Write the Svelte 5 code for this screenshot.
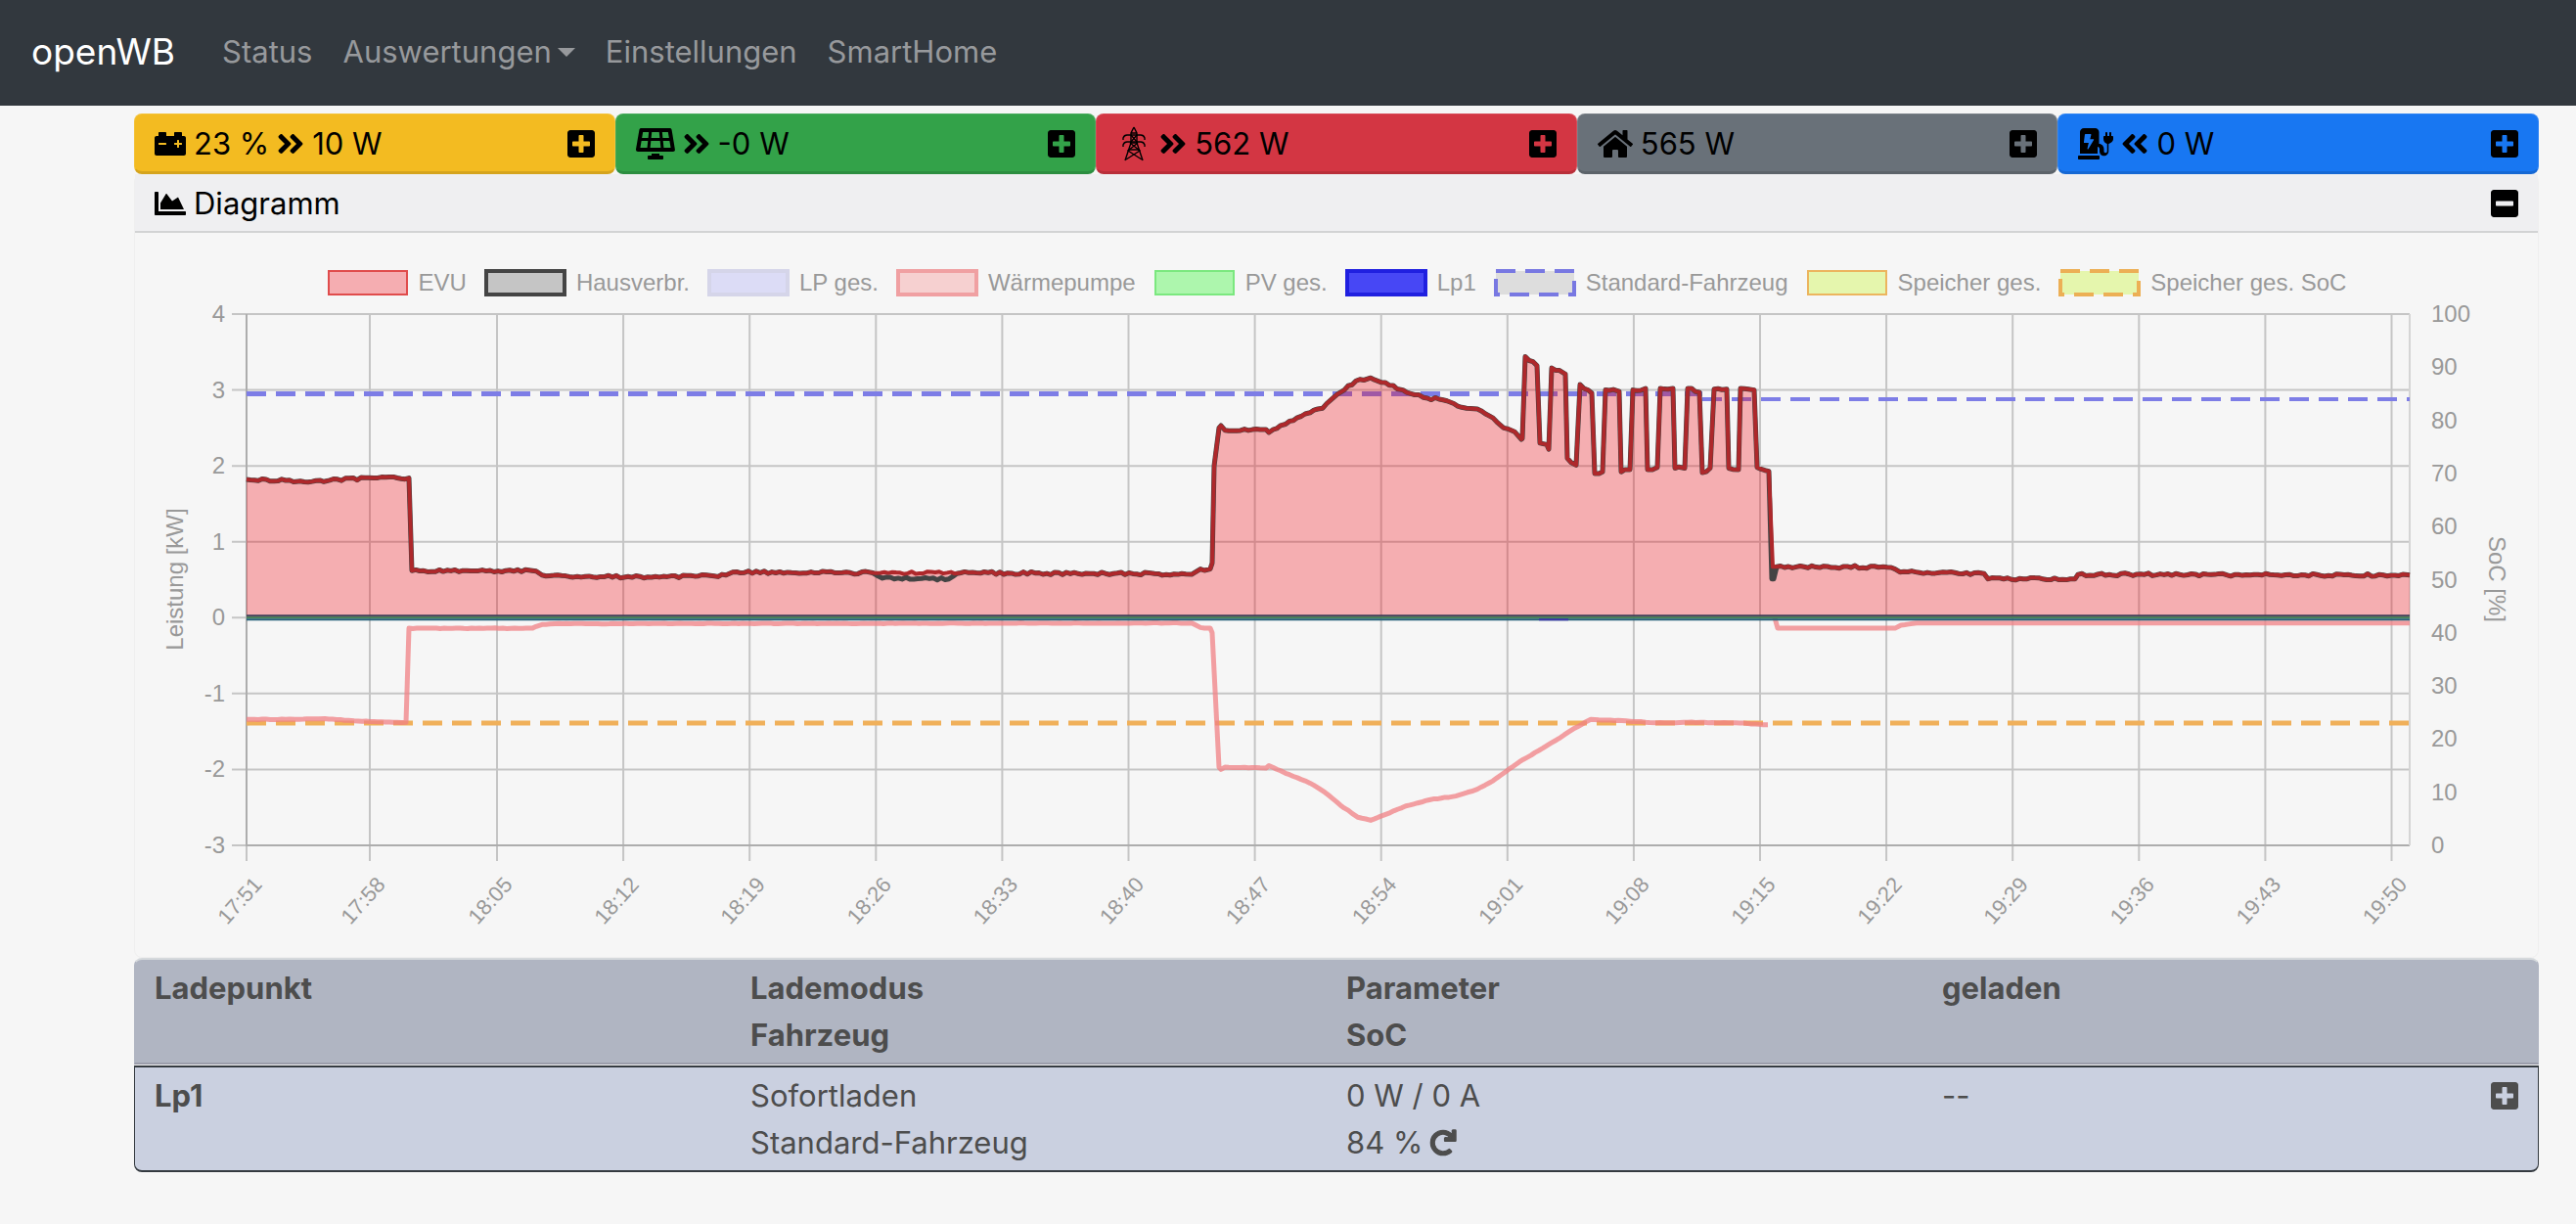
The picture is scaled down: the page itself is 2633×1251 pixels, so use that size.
<script>
  const icons = {
    battery: { w: 512, d: 'M480 128h-32V80c0-8.84-7.16-16-16-16h-96c-8.84 0-16 7.16-16 16v48H192V80c0-8.84-7.16-16-16-16H80c-8.84 0-16 7.16-16 16v48H32c-17.67 0-32 14.33-32 32v256c0 17.67 14.33 32 32 32h448c17.67 0 32-14.33 32-32V160c0-17.67-14.33-32-32-32zM192 264c0 4.42-3.58 8-8 8H72c-4.42 0-8-3.58-8-8v-16c0-4.42 3.58-8 8-8h112c4.42 0 8 3.58 8 8v16zm256 0c0 4.42-3.58 8-8 8h-40v40c0 4.42-3.58 8-8 8h-16c-4.42 0-8-3.58-8-8v-40h-40c-4.42 0-8-3.58-8-8v-16c0-4.42 3.58-8 8-8h40v-40c0-4.42 3.58-8 8-8h16c4.42 0 8 3.58 8 8v40h40c4.42 0 8 3.58 8 8v16z' },
    solar: { w: 640, d: 'M431.98 448.01l-47.97.05V416h-128v32.21l-47.98.05c-8.82.01-15.97 7.16-15.98 15.99l-.05 31.73c-.01 8.85 7.17 16.03 16.02 16.02l223.96-.26c8.82-.01 15.97-7.16 15.98-15.98l.04-31.73c.01-8.85-7.17-16.03-16.02-16.02zM585.2 26.74C582.58 11.31 568.99 0 553.06 0H86.93C71 0 57.41 11.31 54.79 26.74-3.32 369.16.04 348.08.03 352c-.03 17.32 14.29 32 32.6 32h574.74c18.23 0 32.51-14.56 32.59-31.79.02-4.08 3.35 16.95-54.76-325.47zM259.83 64h120.33l9.77 96H250.06l9.77-96zm-75.17 256H71.09L90.1 208h105.97l-11.41 112zm16.16-160H98.24l16.29-96h96.19l-9.9 96zm32.82 160l11.4-112h149.96l11.4 112H233.64zm195.5-256h96.19l16.29 96H439.04l-9.9-96zm26.1 256L443.82 208h105.97l19.01 112H455.24z' },
    home: { w: 576, d: 'M280.37 148.26L96 300.11V464a16 16 0 0 0 16 16l112.06-.29a16 16 0 0 0 15.92-16V368a16 16 0 0 1 16-16h64a16 16 0 0 1 16 16v95.64a16 16 0 0 0 16 16.05L464 480a16 16 0 0 0 16-16V300L295.67 148.26a12.19 12.19 0 0 0-15.3 0zM571.6 251.47L488 182.56V44.05a12 12 0 0 0-12-12h-56a12 12 0 0 0-12 12v72.61L318.47 43a48 48 0 0 0-61 0L4.34 251.47a12 12 0 0 0-1.6 16.9l25.5 31A12 12 0 0 0 45.15 301l235.22-193.74a12.19 12.19 0 0 1 15.3 0L530.9 301a12 12 0 0 0 16.9-1.6l25.5-31a12 12 0 0 0-1.7-16.93z' },
    charger: { w: 576, d: 'M336 448H16c-8.84 0-16 7.16-16 16v32c0 8.84 7.16 16 16 16h320c8.84 0 16-7.16 16-16v-32c0-8.84-7.16-16-16-16zM544 128V80c0-8.84-7.16-16-16-16s-16 7.16-16 16v48h-32V80c0-8.84-7.16-16-16-16s-16 7.16-16 16v48h-16c-8.84 0-16 7.16-16 16v32c0 39 26 71 60 78v122c0 15-11 28-26 28s-26-13-26-28v-32c0-49-35-88-80-88V64c0-35-29-64-64-64H96C61 0 32 29 32 64v352h288V304c20 0 32 18 32 40v30c0 42 32 78 74 78s74-34 74-76V254c34-7 76-39 76-78v-32c0-8.84-7.16-16-16-16zM258 190L166 342c-3 6-16 3-14-5l22-97h-70c-6 0-10-5-9-10l16-126c1-5 5-8 10-8h84c7 0 11 6 10 12l-18 70h53c7 0 11 6 8 12z' },
    right: { w: 448, d: 'M224.3 273l-136 136c-9.4 9.4-24.6 9.4-33.9 0l-22.6-22.6c-9.4-9.4-9.4-24.6 0-33.9l96.4-96.4-96.4-96.4c-9.4-9.4-9.4-24.6 0-33.9L54.3 103c9.4-9.4 24.6-9.4 33.9 0l136 136c9.5 9.4 9.5 24.6.1 34zm192-34l-136-136c-9.4-9.4-24.6-9.4-33.9 0l-22.6 22.6c-9.4 9.4-9.4 24.6 0 33.9l96.4 96.4-96.4 96.4c-9.4 9.4-9.4 24.6 0 33.9l22.6 22.6c9.4 9.4 24.6 9.4 33.9 0l136-136c9.4-9.2 9.4-24.4 0-33.8z' },
    plus: { w: 448, d: 'M400 32H48C21.5 32 0 53.5 0 80v352c0 26.5 21.5 48 48 48h352c26.5 0 48-21.5 48-48V80c0-26.5-21.5-48-48-48zm-32 252c0 6.6-5.4 12-12 12h-92v92c0 6.6-5.4 12-12 12h-56c-6.6 0-12-5.4-12-12v-92H92c-6.6 0-12-5.4-12-12v-56c0-6.6 5.4-12 12-12h92v-92c0-6.6 5.4-12 12-12h56c6.6 0 12 5.4 12 12v92h92c6.6 0 12 5.4 12 12v56z' },
    minus: { w: 448, d: 'M400 32H48C21.5 32 0 53.5 0 80v352c0 26.5 21.5 48 48 48h352c26.5 0 48-21.5 48-48V80c0-26.5-21.5-48-48-48zM92 296c-6.6 0-12-5.4-12-12v-56c0-6.6 5.4-12 12-12h264c6.6 0 12 5.4 12 12v56c0 6.6-5.4 12-12 12H92z' },
    area: { w: 512, d: 'M500 384c6.6 0 12 5.4 12 12v40c0 6.6-5.4 12-12 12H12c-6.6 0-12-5.4-12-12V76c0-6.6 5.4-12 12-12h40c6.6 0 12 5.4 12 12v308h436zM372.7 159.5L288 216l-85.3-113.7c-5.1-6.8-15.5-6.3-19.9 1L96 248v104h384l-89.9-187.8c-3.2-6.5-11.4-8.7-17.4-4.7z' },
    redo: { w: 512, d: 'M500.33 0h-47.41a12 12 0 0 0-12 12.57l4 82.76A247.42 247.42 0 0 0 256 8C119.34 8 7.9 119.53 8 256.19 8.1 393.07 119.1 504 256 504a247.1 247.1 0 0 0 166.18-63.91 12 12 0 0 0 .48-17.43l-34-34a12 12 0 0 0-16.38-.55A176 176 0 1 1 402.1 157.8l-101.53-4.87a12 12 0 0 0-12.57 12v47.41a12 12 0 0 0 12 12h200.33a12 12 0 0 0 12-12V12a12 12 0 0 0-12-12z' }
  };

  const cards = [
    { kind: 'storage', icon: 'battery', before: '23 %', arrow: 'right', value: '10 W' },
    { kind: 'pv', icon: 'solar', arrow: 'right', value: '-0 W' },
    { kind: 'grid', icon: 'pylon', arrow: 'right', value: '562 W' },
    { kind: 'house', icon: 'home', value: '565 W' },
    { kind: 'charge', icon: 'charger', arrow: 'left', value: '0 W' }
  ];

  const legend = [
    { label: 'EVU', fill: '#f5adb1', stroke: '#e04c4c', width: 2 },
    { label: 'Hausverbr.', fill: '#c5c5c5', stroke: '#444444', width: 4 },
    { label: 'LP ges.', fill: '#dcdcf6', stroke: '#d5d5e9', width: 4 },
    { label: 'Wärmepumpe', fill: '#f6d0d0', stroke: '#f0a0a2', width: 4 },
    { label: 'PV ges.', fill: '#adf6ad', stroke: '#7be87f', width: 2 },
    { label: 'Lp1', fill: '#4747f5', stroke: '#2020e0', width: 4 },
    { label: 'Standard-Fahrzeug', fill: '#dddddd', stroke: '#7878e2', width: 4, dash: '20 10' },
    { label: 'Speicher ges.', fill: '#e5f6ad', stroke: '#ecb55e', width: 2 },
    { label: 'Speicher ges. SoC', fill: '#e5f6ad', stroke: '#ecaf55', width: 4, dash: '20 10' }
  ];

  // Plot geometry in view box units
  const left = 114;
  const top = 18;
  const width = 2211;
  const height = 543;
  const right = left + width;
  const bottom = top + height;

  const kwY = (kw) => top + ((4 - kw) * height) / 7;
  const socY = (soc) => bottom - (soc * height) / 100;

  const kwTicks = [4, 3, 2, 1, 0, -1, -2, -3];
  const socTicks = [100, 90, 80, 70, 60, 50, 40, 30, 20, 10, 0];
  const times = ['17:51', '17:58', '18:05', '18:12', '18:19', '18:26', '18:33', '18:40', '18:47',
    '18:54', '19:01', '19:08', '19:15', '19:22', '19:29', '19:36', '19:43', '19:50'];
  const timeX = (i) => left + (i === 0 ? 0 : i === 1 ? 126 : 256 + (i - 2) * 129.1);

  const peaks = [
    [987, 0.72], [989, 2], [994, 2.5], [996, 2.53], [1000, 2.47], [1042, 2.48], [1045, 2.44], [1062, 2.55],
    [1087, 2.7], [1100, 2.76], [1111, 2.9], [1122, 3], [1134, 3.12], [1149, 3.16], [1160, 3.1], [1182, 3],
    [1203, 2.9], [1223, 2.87], [1234, 2.82], [1247, 2.76], [1258, 2.75], [1270, 2.66], [1285, 2.5],
    [1296, 2.45], [1303, 2.35], [1304, 2.36], [1307, 3.44], [1319, 3.32], [1322, 2.3], [1329, 2.28],
    [1331, 2.22], [1334, 3.29], [1348, 3.21], [1350, 2.1], [1359, 2.01], [1363, 3.07], [1375, 2.96],
    [1378, 1.9], [1386, 1.92], [1389, 3], [1403, 2.98], [1405, 1.92], [1414, 1.95], [1417, 3], [1430, 3.02],
    [1432, 1.95], [1437, 1.95], [1442, 1.98], [1445, 3.02], [1458, 3.02], [1460, 1.97], [1470, 1.97],
    [1473, 3.02], [1485, 2.97], [1488, 1.91], [1496, 1.97], [1500, 3.01], [1513, 3.01], [1515, 1.97],
    [1525, 1.95], [1527, 3.02], [1541, 3], [1544, 1.98], [1556, 1.93]
  ];
  const start = [[0, 1.82], [55, 1.8], [85, 1.81], [130, 1.84], [166, 1.84], [169, 0.62], [292, 0.62],
    [302, 0.56], [330, 0.54], [430, 0.54], [490, 0.56], [497, 0.6], [640, 0.59]];
  const middle = [[730, 0.59], [928, 0.58], [944, 0.56], [966, 0.57], [975, 0.64], [985, 0.64]];
  const end = [[1564, 0.67], [1673, 0.67], [1685, 0.64], [1690, 0.6], [1776, 0.58], [1780, 0.51],
    [1869, 0.51], [1872, 0.57], [2211, 0.56]];

  const evu = [...start, ...middle, ...peaks, [1560, 0.67], ...end];
  const house = [...start, [650, 0.52], [718, 0.51], [726, 0.58], ...middle, ...peaks, [1559, 0.51], [1561, 0.51], ...end];

  const heatA = [[0, -1.34], [50, -1.34], [80, -1.33], [110, -1.36], [150, -1.38], [163, -1.38], [166, -0.14],
    [292, -0.14], [302, -0.09], [315, -0.08], [966, -0.07], [975, -0.13], [985, -0.14], [987, -0.2],
    [994, -1.97], [996, -2], [1000, -1.97], [1042, -1.98], [1045, -1.95], [1062, -2.05], [1087, -2.18],
    [1102, -2.3], [1118, -2.47], [1136, -2.63], [1149, -2.67], [1165, -2.59], [1185, -2.48], [1209, -2.4],
    [1236, -2.35], [1258, -2.26], [1274, -2.15], [1287, -2.03], [1301, -1.9], [1321, -1.75], [1339, -1.61],
    [1352, -1.5], [1368, -1.38], [1374, -1.34], [1410, -1.36], [1441, -1.385], [1486, -1.38],
    [1522, -1.385], [1555, -1.41]];
  const heatB = [[1562, 0], [1565, -0.14], [1685, -0.14], [1691, -0.1], [1707, -0.07], [2211, -0.07]];

  // Meter readings wobble by a few watts between two known values
  function trace(points, wobble) {
    const out = [];
    for (let i = 0; i < points.length; i++) {
      const [x, kw] = points[i];
      out.push(`${left + x},${kwY(kw).toFixed(1)}`);
      const next = points[i + 1];
      if (!next) continue;
      for (let s = x + 4; s < next[0] - 3; s += 4) {
        const value = kw + ((next[1] - kw) * (s - x)) / (next[0] - x);
        const seed = Math.sin(s * 12.9898) * 43758.5453;
        const noise = wobble * (seed - Math.floor(seed) - 0.5);
        out.push(`${left + s},${kwY(value + noise).toFixed(1)}`);
      }
    }
    return out.join(' ');
  }

  const evuLine = trace(evu, 0.036);
  const houseLine = trace(house, 0.036);
  const evuArea = `${left},${kwY(0)} ${evuLine} ${right},${kwY(0)}`;
</script>

{#snippet icon(name, extra = '')}
  <svg class="icon {extra}" viewBox="0 0 {icons[name].w} 512" style:width="{icons[name].w / 16}px" aria-hidden="true">
    <path d={icons[name].d} />
  </svg>
{/snippet}

{#snippet pylon()}
  <svg class="pylon" viewBox="0 0 36 36" aria-hidden="true">
    <path d="M18 1l-3 6v10l-6 18M18 1l3 6v10l6 18M15 7h6M14 17h8M12 24h12" />
    <path d="M7 14v-2q1-3 4-3h14q3 0 4 3v2M7 21v-2q1-3 4-3h14q3 0 4 3v2" />
    <path d="M15 9l6 7M21 9l-6 7M14 17l10 8-14 9M22 17l-10 8 14 9" />
  </svg>
{/snippet}

<nav class="navbar">
  <a class="brand" href="#home">openWB</a>
  <a href="#status">Status</a>
  <a href="#auswertungen">Auswertungen<span class="caret"></span></a>
  <a href="#einstellungen">Einstellungen</a>
  <a href="#smarthome">SmartHome</a>
</nav>

<main class="container">
  <div class="cards">
    {#each cards as card}
      <div class="card {card.kind}">
        {#if card.icon === 'pylon'}
          {@render pylon()}
        {:else}
          {@render icon(card.icon)}
        {/if}
        {#if card.before}<span>{card.before}</span>{/if}
        {#if card.arrow}{@render icon('right', card.arrow === 'left' ? 'flip' : '')}{/if}
        <span>{card.value}</span>
        <button class="toggle" aria-label="Aufklappen">{@render icon('plus')}</button>
      </div>
    {/each}
  </div>

  <section class="diagram">
    <header class="diagram-head">
      {@render icon('area')}
      <span>Diagramm</span>
      <button class="toggle" aria-label="Zuklappen">{@render icon('minus')}</button>
    </header>

    <div class="legend">
      {#each legend as item}
        <span class="legend-item">
          <svg class="swatch" viewBox="0 0 84 28" aria-hidden="true">
            <rect x="2" y="2" width="80" height="24" fill={item.fill} stroke={item.stroke} stroke-width={item.width} stroke-dasharray={item.dash} />
          </svg>
          {item.label}
        </span>
      {/each}
    </div>

    <svg class="chart" viewBox="0 0 2456 675" role="img" aria-label="Leistung und SoC">
      <g class="gridlines">
        {#each kwTicks as kw}
          <line x1={left - 15} x2={right} y1={kwY(kw)} y2={kwY(kw)} />
        {/each}
        {#each times as _, i}
          <line x1={timeX(i)} x2={timeX(i)} y1={top} y2={bottom + 16} />
        {/each}
      </g>
      <path class="axis" d="M{left} {top}V{bottom}H{right}" />
      <path class="edge" d="M{right} {top}V{bottom}" />

      <path class="soc car" d="M{left} {socY(85)}H{left + 1488}" />
      <path class="soc car later" d="M{left + 1488} {socY(84)}H{right}" />
      <path class="soc storage-soc" d="M{left} {socY(23)}H{right}" />

      <polygon class="evu-area" points={evuArea} />
      <polyline class="house-line" points={houseLine} />
      <polyline class="evu-line" points={evuLine} />
      <polyline class="heat-line" points={trace(heatA, 0.008)} />
      <polyline class="heat-line" points={trace(heatB, 0)} />

      <g class="zero">
        <path stroke="#40405a" d="M{left} {kwY(0) - 2}H{right}" />
        <path stroke="#3f8055" d="M{left} {kwY(0)}H{right}" />
        <path stroke="#255f78" d="M{left} {kwY(0) + 2}H{right}" />
        <path stroke="#3a35a8" d="M{left + 1321} {kwY(0) + 2}h30" />
      </g>

      <g class="labels">
        {#each kwTicks as kw}
          <text x={left - 22} y={kwY(kw) + 8} text-anchor="end">{kw}</text>
        {/each}
        {#each socTicks as soc}
          <text x={right + 22} y={socY(soc) + 8}>{soc}</text>
        {/each}
        {#each times as time, i}
          <text class="time" text-anchor="end" transform="translate({timeX(i) + 17} {bottom + 41}) rotate(-48)">{time}</text>
        {/each}
        <text text-anchor="middle" transform="translate(49 289) rotate(-90)">Leistung [kW]</text>
        <text text-anchor="middle" transform="translate(2406 289) rotate(90)">SoC [%]</text>
      </g>
    </svg>
  </section>

  <table class="points">
    <thead>
      <tr>
        <th>Ladepunkt</th>
        <th>Lademodus<br />Fahrzeug</th>
        <th>Parameter<br />SoC</th>
        <th>geladen</th>
      </tr>
    </thead>
    <tbody>
      <tr>
        <th scope="row">Lp1</th>
        <td>Sofortladen<br />Standard-Fahrzeug</td>
        <td>
          0 W / 0 A<br />
          <span class="car-soc">84 % <button class="reload" aria-label="SoC aktualisieren">{@render icon('redo')}</button></span>
        </td>
        <td class="charged">
          <span>--</span>
          <button class="toggle" aria-label="Aufklappen">{@render icon('plus')}</button>
        </td>
      </tr>
    </tbody>
  </table>
</main>

<style>
  :global(body) {
    margin: 0;
    background: #f6f6f6;
    font-family: Inter, 'Liberation Sans', sans-serif;
    font-size: 31px;
    line-height: 48px;
  }

  button {
    display: flex;
    padding: 0;
    border: none;
    background: none;
    color: inherit;
    cursor: pointer;
  }

  .icon {
    flex-shrink: 0;
    height: 32px;
    fill: currentColor;
  }

  .flip {
    transform: scaleX(-1);
  }

  .toggle {
    margin-left: auto;
  }

  .navbar {
    display: flex;
    align-items: center;
    gap: 31px;
    height: 108px;
    padding: 0 32px 2px;
    box-sizing: border-box;
    background: #32383e;
  }

  .navbar a {
    display: flex;
    align-items: center;
    color: #97999c;
    text-decoration: none;
  }

  .navbar .brand {
    margin-right: 17px;
    color: #ffffff;
    font-size: 37px;
  }

  .caret {
    margin-left: 6px;
    border: 9px solid transparent;
    border-top-color: currentColor;
    border-bottom: none;
  }

  .container {
    padding: 8px 38px 0 137px;
  }

  .cards {
    display: grid;
    grid-template-columns: repeat(5, 1fr);
  }

  .card {
    display: flex;
    align-items: center;
    gap: 8px;
    padding: 8px 20px 6px;
    border: 1px solid rgba(255, 255, 255, 0.1);
    border-bottom: 3px solid rgba(0, 0, 0, 0.12);
    box-sizing: border-box;
    height: 62px;
    border-radius: 8px;
    color: #000000;
  }

  .storage { background: #f3bb21; }
  .pv { background: #33a249; }
  .grid { background: #d33643; }
  .house { background: #697179; }
  .charge { background: #1877f2; }

  .pylon {
    flex-shrink: 0;
    width: 36px;
    height: 36px;
    fill: none;
    stroke: currentColor;
    stroke-width: 1.4;
  }

  .diagram {
    border: 1px solid #efefef;
    border-top: none;
    border-radius: 8px;
  }

  .diagram-head {
    display: flex;
    align-items: center;
    gap: 8px;
    height: 60px;
    padding: 2px 20px 0;
    box-sizing: border-box;
    border-bottom: 2px solid #d2d3d4;
    background: #efeff1;
    color: #000000;
  }

  .legend {
    display: flex;
    justify-content: center;
    gap: 18px;
    padding-top: 37px;
    color: #999999;
    font: 24px/28px 'Liberation Sans', Arial, sans-serif;
  }

  .legend-item {
    display: flex;
    align-items: center;
    gap: 10px;
    white-space: nowrap;
  }

  .swatch {
    width: 84px;
    height: 28px;
  }

  .chart {
    display: block;
    width: 100%;
  }

  .chart line,
  .axis,
  .edge {
    fill: none;
    stroke: #c5c5c5;
    stroke-width: 2;
  }

  .chart .axis { stroke: #adadad; }
  .chart .edge { stroke: #d5d5d5; }

  .labels text {
    fill: #999999;
    font: 24px 'Liberation Sans', Arial, sans-serif;
  }

  .labels .time {
    font-size: 22px;
  }

  .soc {
    fill: none;
    stroke-width: 5;
    stroke-dasharray: 20 10;
  }

  .car { stroke: #7d7de6; }
  .later { stroke-width: 4; }
  .storage-soc { stroke: #f0b05a; }

  .evu-area { fill: rgba(243, 5, 15, 0.3); }

  .house-line,
  .evu-line,
  .heat-line {
    fill: none;
    stroke-width: 4;
    stroke-linejoin: round;
  }

  .house-line { stroke: #444444; stroke-width: 5; }
  .evu-line { stroke: #ae282b; }
  .heat-line { stroke: rgba(240, 128, 132, 0.75); stroke-width: 5; }
  .zero path { stroke-width: 2; }

  .points {
    display: block;
    color: #4d4d4d;
  }

  .points thead,
  .points tbody {
    display: block;
  }

  .points tr {
    display: grid;
    grid-template-columns: repeat(4, 1fr);
    padding: 5px 10px 4px;
    border: 2px solid #9fa2ae;
  }

  .points thead tr {
    border-color: #d5d9dc #b0b5c2 #9b9dab;
    border-width: 2px 1px;
    border-radius: 8px 8px 0 0;
    background: #b0b5c2;
  }

  .points tbody tr {
    margin-top: 1px;
    border-color: #343a40;
    border-width: 2px 1px;
    border-radius: 0 0 8px 8px;
    background: #cad0e0;
  }

  .points th,
  .points td {
    padding: 0 10px;
    text-align: left;
  }

  .points th {
    font-weight: 700;
  }

  .car-soc {
    display: flex;
    align-items: center;
    gap: 8px;
  }

  .reload .icon {
    height: 26px;
    max-width: 26px;
    stroke: currentColor;
    stroke-width: 28;
    overflow: visible;
  }

  .charged {
    display: flex;
    align-items: flex-start;
  }

  .charged .toggle {
    margin-top: 8px;
  }
</style>
